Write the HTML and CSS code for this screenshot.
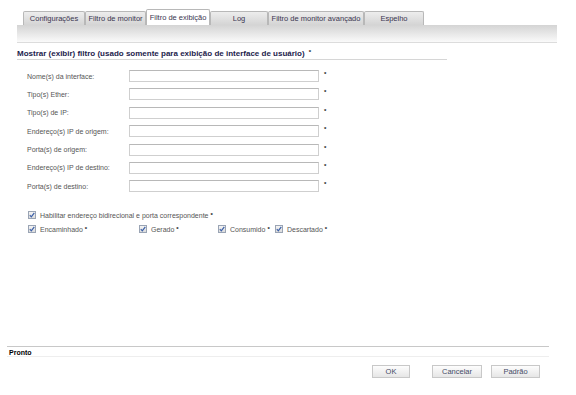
FILE: index.html
```html
<!DOCTYPE html>
<html lang="pt">
<head>
  <meta charset="UTF-8" />
  <title>Filtro de exibição</title>
  <link rel="stylesheet" href="styles.css">
</head>
<body>
  <div class="page">
    <div class="tabs">
      <div class="tab" style="width:62px">Configurações</div>
      <div class="tab" style="width:61px">Filtro de monitor</div>
      <div class="tab active" style="width:64px">Filtro de exibição</div>
      <div class="tab" style="width:58px">Log</div>
      <div class="tab" style="width:96px">Filtro de monitor avançado</div>
      <div class="tab" style="width:60px">Espelho</div>
    </div>
    <div class="band"></div>

    <div class="content">
      <div class="heading">Mostrar (exibir) filtro (usado somente para exibição de interface de usuário) <span class="mark">*</span></div>

      <div class="form">
        <label>Nome(s) da interface:</label><input type="text"><span class="mark">*</span>
        <label>Tipo(s) Ether:</label><input type="text"><span class="mark">*</span>
        <label>Tipo(s) de IP:</label><input type="text"><span class="mark">*</span>
        <label>Endereço(s) IP de origem:</label><input type="text"><span class="mark">*</span>
        <label>Porta(s) de origem:</label><input type="text"><span class="mark">*</span>
        <label>Endereço(s) IP de destino:</label><input type="text"><span class="mark">*</span>
        <label>Porta(s) de destino:</label><input type="text"><span class="mark">*</span>
      </div>

      <div class="checks">
        <div class="check-row">
          <span class="cb"><svg width="8" height="8" viewBox="0 0 8 8"><path d="M1.8 4.2 L3.3 5.8 L6.3 1.8" fill="none" stroke="#3a5fa8" stroke-width="1.2"/></svg></span>
          <span>Habilitar endereço bidirecional e porta correspondente</span><span class="mark">*</span>
        </div>
        <div class="check-row">
          <div class="opt w1">
            <span class="cb"><svg width="8" height="8" viewBox="0 0 8 8"><path d="M1.8 4.2 L3.3 5.8 L6.3 1.8" fill="none" stroke="#3a5fa8" stroke-width="1.2"/></svg></span>
            <span>Encaminhado</span><span class="mark">*</span>
          </div>
          <div class="opt w2">
            <span class="cb"><svg width="8" height="8" viewBox="0 0 8 8"><path d="M1.8 4.2 L3.3 5.8 L6.3 1.8" fill="none" stroke="#3a5fa8" stroke-width="1.2"/></svg></span>
            <span>Gerado</span><span class="mark">*</span>
          </div>
          <div class="opt w3">
            <span class="cb"><svg width="8" height="8" viewBox="0 0 8 8"><path d="M1.8 4.2 L3.3 5.8 L6.3 1.8" fill="none" stroke="#3a5fa8" stroke-width="1.2"/></svg></span>
            <span>Consumido</span><span class="mark">*</span>
          </div>
          <div class="opt">
            <span class="cb"><svg width="8" height="8" viewBox="0 0 8 8"><path d="M1.8 4.2 L3.3 5.8 L6.3 1.8" fill="none" stroke="#3a5fa8" stroke-width="1.2"/></svg></span>
            <span>Descartado</span><span class="mark">*</span>
          </div>
        </div>
      </div>
    </div>

    <div class="status">Pronto</div>
    <div class="buttons">
      <button class="ok">OK</button>
      <button class="cancel">Cancelar</button>
      <button>Padrão</button>
    </div>
  </div>
</body>
</html>
```

FILE: styles.css
```css
body {
  margin: 0;
  background: #fff;
  font-family: "Liberation Sans", Arial, sans-serif;
  font-size: 7px;
  color: #444;
}
.page {
  width: 576px;
  height: 395px;
  display: flex;
  flex-direction: column;
}
.tabs {
  display: flex;
  align-items: flex-end;
  padding-left: 23px;
  margin-top: 10px;
  height: 15px;
  font-size: 7.5px;
}
.tab {
  height: 14px;
  line-height: 14px;
  text-align: center;
  box-sizing: border-box;
  border: 1px solid #b8b8b8;
  border-bottom: none;
  border-radius: 2px 2px 0 0;
  background: linear-gradient(#ededed, #d4d4d4);
  color: #3a3550;
  white-space: nowrap;
}
.tab.active {
  height: 16px;
  line-height: 15px;
  background: #fff;
}
.band {
  margin: 0 19px 0 17px;
  height: 17px;
  background: linear-gradient(#d4d4d4, #fafafa);
  border-bottom: 1px solid #dcdcdc;
}
.content {
  flex: 1;
}
.heading {
  margin: 6px 0 0 17px;
  width: 430px;
  padding-bottom: 1px;
  border-bottom: 1px solid #d6d6d6;
  font-weight: bold;
  font-size: 8px;
  color: #1c1c4c;
}
.mark {
  font-size: 6px;
  font-weight: bold;
  color: #111;
  vertical-align: top;
  margin-left: 2px;
}
.form {
  display: grid;
  grid-template-columns: 102px 190px 10px;
  row-gap: 6.4px;
  align-items: center;
  margin: 10px 0 0 27px;
}
.form label {
  color: #555;
}
.form input {
  height: 12px;
  box-sizing: border-box;
  border: 1px solid #cfcfcf;
  border-top-color: #b8b8b8;
  padding: 0;
  margin: 0;
  width: 190px;
}
.form .mark {
  margin-left: 5px;
  margin-top: -4px;
}
.checks {
  margin: 16px 0 0 28px;
  color: #555;
}
.check-row {
  display: flex;
  align-items: center;
  height: 14px;
}
.opt {
  display: flex;
  align-items: center;
}
.opt.w1 { width: 111px; }
.opt.w2 { width: 79px; }
.opt.w3 { width: 57px; }
.cb {
  display: inline-flex;
  width: 8px;
  height: 8px;
  box-sizing: border-box;
  border: 1px solid #9aa4b4;
  background: linear-gradient(#f4f4f4, #dcdcdc);
  margin-right: 4px;
}
.cb svg {
  margin: -1px;
}
.status {
  margin: 0 27px 0 7px;
  height: 11px;
  line-height: 11px;
  box-sizing: border-box;
  border-top: 1px solid #c8c8c8;
  border-bottom: 1px solid #eee;
  color: #000;
  font-weight: bold;
  padding-left: 2px;
}
.buttons {
  display: flex;
  justify-content: flex-end;
  margin: 8px 36px 17px 0;
}
button {
  width: 49px;
  height: 13px;
  padding: 0;
  border: 1px solid #c8c8c8;
  background: linear-gradient(#fdfdfd, #e6e6e6);
  font-family: "Liberation Sans", Arial, sans-serif;
  font-size: 7.5px;
  color: #444a66;
}
button.ok {
  width: 38px;
  margin-right: 22px;
}
button.cancel {
  width: 50px;
  margin-right: 9px;
}
```
